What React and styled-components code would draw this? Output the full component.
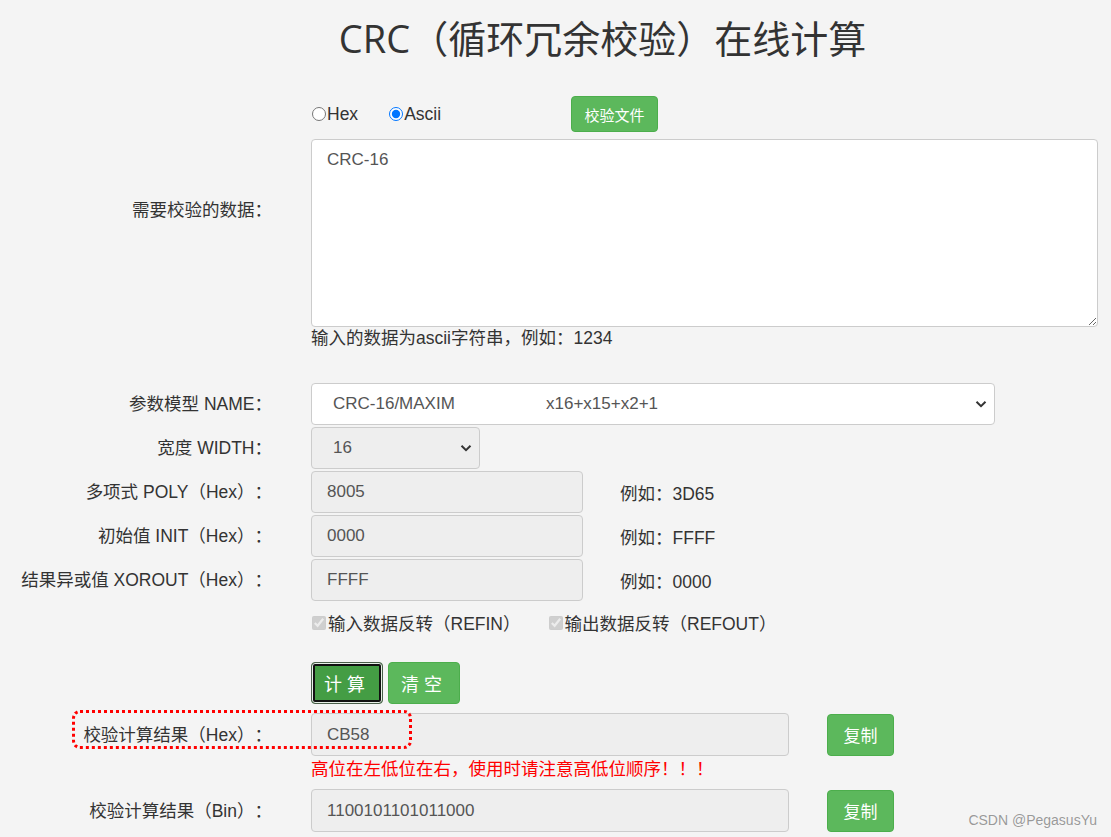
import React from "react";
import styled, { createGlobalStyle } from "styled-components";

const GlobalStyle = createGlobalStyle`
  html, body {
    margin: 0;
    padding: 0;
    background: #f4f4f4;
  }
  body {
    font-family: "Liberation Sans", "Noto Sans CJK SC", sans-serif;
    color: #333;
    font-size: 17.5px;
    text-spacing-trim: space-all;
  }
`;

const Page = styled.div`
  position: relative;
  width: 1111px;
  min-height: 837px;
  overflow: hidden;
`;

const Title = styled.h1`
  margin: 0;
  padding: 12px 0 0 94px;
  font-family: "Open Sans", "Noto Sans CJK SC", sans-serif;
  font-size: 38px;
  font-weight: 400;
  line-height: 52px;
  text-align: center;
  color: #333;
`;

const Row = styled.div`
  display: grid;
  grid-template-columns: 272px 1fr;
  column-gap: 39px;
  align-items: center;
  position: relative;
  margin-top: ${(p) => p.$top || 0}px;
  height: ${(p) => (p.$h ? `${p.$h}px` : "auto")};
`;

const Label = styled.label`
  text-align: right;
  white-space: nowrap;
  font-size: 17.5px;
  line-height: 24px;
  color: #333;
  align-self: ${(p) => (p.$offset ? "start" : "center")};
  padding-top: ${(p) => p.$offset || 0}px;
`;

const Field = styled.div`
  display: flex;
  align-items: center;
  height: 100%;
`;

const RadioItem = styled.label`
  display: flex;
  align-items: center;
  font-size: 17.5px;
  color: #333;
  margin-right: ${(p) => p.$mr || 0}px;

  input {
    margin: 0 1px 0 1px;
    width: 14px;
    height: 14px;
  }
`;

const GreenButton = styled.button`
  font-family: "Liberation Sans", "Noto Sans CJK SC", sans-serif;
  background: #5cb85c;
  border: 1px solid #4cae4c;
  border-radius: 4px;
  color: #fff;
  font-size: ${(p) => p.$fs || 16}px;
  width: ${(p) => p.$w}px;
  height: ${(p) => p.$h}px;
  padding: 0;
  cursor: pointer;
  letter-spacing: ${(p) => p.$ls || 0}px;
  margin-left: ${(p) => p.$ml || 0}px;
`;

const ActiveButton = styled(GreenButton)`
  background: #449d44;
  border: 1px solid #4a5f4a;
  box-shadow: inset 0 0 0 1px #e8f0e8, inset 0 0 0 3px #111;
`;

const TextArea = styled.textarea`
  box-sizing: border-box;
  width: 787px;
  height: 188px;
  padding: 9px 15px;
  background: #fff;
  border: 1px solid #ccc;
  border-radius: 4px;
  font-family: "Liberation Sans", "Noto Sans CJK SC", sans-serif;
  font-size: 17px;
  line-height: 22px;
  color: #555;
  resize: both;
  display: block;
`;

const Hint = styled.div`
  font-size: 17.5px;
  line-height: 21px;
  color: ${(p) => p.$color || "#333"};
`;

const SelectBox = styled.div`
  box-sizing: border-box;
  display: flex;
  align-items: center;
  width: ${(p) => p.$w}px;
  height: 42px;
  padding: 0 7px 0 21px;
  background: ${(p) => (p.$disabled ? "#eee" : "#fff")};
  border: 1px solid #ccc;
  border-radius: 4px;
  font-size: 17px;
  color: #555;
`;

const SelectText = styled.span`
  flex: 1;
  display: flex;
  white-space: nowrap;
`;

const OptName = styled.span`
  width: 213px;
`;

const TextInput = styled.div`
  box-sizing: border-box;
  display: flex;
  align-items: center;
  width: ${(p) => p.$w}px;
  height: ${(p) => p.$h || 42}px;
  padding: 0 15px;
  background: #eee;
  border: 1px solid #ccc;
  border-radius: 4px;
  font-size: 17px;
  color: #555;
`;

const Aside = styled.span`
  margin-left: 37px;
  font-size: 17.5px;
  color: #333;
`;

const CheckItem = styled.label`
  display: flex;
  align-items: center;
  font-size: 17.5px;
  color: #333;
  margin-right: ${(p) => p.$mr || 0}px;

  input {
    margin: 0 2px 0 1px;
    width: 14px;
    height: 14px;
  }
`;

const Mark = styled.div`
  position: absolute;
  left: 72px;
  top: -3px;
  width: 334px;
  height: 33px;
  border: 3px dotted #f00;
  border-radius: 8px;
  pointer-events: none;
`;

const Watermark = styled.div`
  position: absolute;
  right: 14px;
  bottom: 9px;
  font-family: "Liberation Sans", sans-serif;
  font-size: 14px;
  color: #999;
  text-shadow: 0 0 1px #fff;
`;

function Chevron() {
  return (
    <svg width="12" height="12" viewBox="0 0 12 12">
      <path d="M1.5 3.8 L6 8.2 L10.5 3.8" fill="none" stroke="#333" strokeWidth="2" />
    </svg>
  );
}

const params = [
  { label: "多项式 POLY（Hex）：", value: "8005", hint: "例如：3D65" },
  { label: "初始值 INIT（Hex）：", value: "0000", hint: "例如：FFFF" },
  { label: "结果异或值 XOROUT（Hex）：", value: "FFFF", hint: "例如：0000" },
];

export default function App() {
  return (
    <Page>
      <GlobalStyle />
      <Title>CRC（循环冗余校验）在线计算</Title>

      <Row $top={32} $h={36}>
        <span />
        <Field>
          <RadioItem $mr={30}>
            <input type="radio" name="fmt" readOnly />
            Hex
          </RadioItem>
          <RadioItem $mr={130}>
            <input type="radio" name="fmt" defaultChecked />
            Ascii
          </RadioItem>
          <GreenButton $w={87} $h={36} $fs={15}>校验文件</GreenButton>
        </Field>
      </Row>

      <Row $top={7}>
        <Label $offset={59}>需要校验的数据：</Label>
        <TextArea defaultValue="CRC-16" />
      </Row>

      <Row $top={1}>
        <span />
        <Hint>输入的数据为ascii字符串，例如：1234</Hint>
      </Row>

      <Row $top={34} $h={42}>
        <Label>参数模型 NAME：</Label>
        <Field>
          <SelectBox $w={684}>
            <SelectText>
              <OptName>CRC-16/MAXIM</OptName>
              <span>x16+x15+x2+1</span>
            </SelectText>
            <Chevron />
          </SelectBox>
        </Field>
      </Row>

      <Row $top={2} $h={42}>
        <Label>宽度 WIDTH：</Label>
        <Field>
          <SelectBox $w={169} $disabled>
            <SelectText>16</SelectText>
            <Chevron />
          </SelectBox>
        </Field>
      </Row>

      {params.map((p) => (
        <Row key={p.label} $top={2} $h={42}>
          <Label>{p.label}</Label>
          <Field>
            <TextInput $w={272}>{p.value}</TextInput>
            <Aside>{p.hint}</Aside>
          </Field>
        </Row>
      ))}

      <Row $top={9} $h={22}>
        <span />
        <Field>
          <CheckItem $mr={27}>
            <input type="checkbox" defaultChecked disabled />
            输入数据反转（REFIN）
          </CheckItem>
          <CheckItem>
            <input type="checkbox" defaultChecked disabled />
            输出数据反转（REFOUT）
          </CheckItem>
        </Field>
      </Row>

      <Row $top={30} $h={42}>
        <span />
        <Field>
          <ActiveButton $w={72} $h={42} $fs={18} $ls={5}>计算</ActiveButton>
          <GreenButton $w={72} $h={42} $fs={18} $ls={5} $ml={5}>清空</GreenButton>
        </Field>
      </Row>

      <Row $top={9} $h={43}>
        <Mark />
        <Label>校验计算结果（Hex）：</Label>
        <Field>
          <TextInput $w={478} $h={43}>CB58</TextInput>
          <GreenButton $w={67} $h={42} $fs={17} $ml={38}>复制</GreenButton>
        </Field>
      </Row>

      <Row $top={3}>
        <span />
        <Hint $color="#f00">高位在左低位在右，使用时请注意高低位顺序！！！</Hint>
      </Row>

      <Row $top={9} $h={43}>
        <Label>校验计算结果（Bin）：</Label>
        <Field>
          <TextInput $w={478} $h={43}>1100101101011000</TextInput>
          <GreenButton $w={67} $h={42} $fs={17} $ml={38}>复制</GreenButton>
        </Field>
      </Row>

      <Watermark>CSDN @PegasusYu</Watermark>
    </Page>
  );
}
